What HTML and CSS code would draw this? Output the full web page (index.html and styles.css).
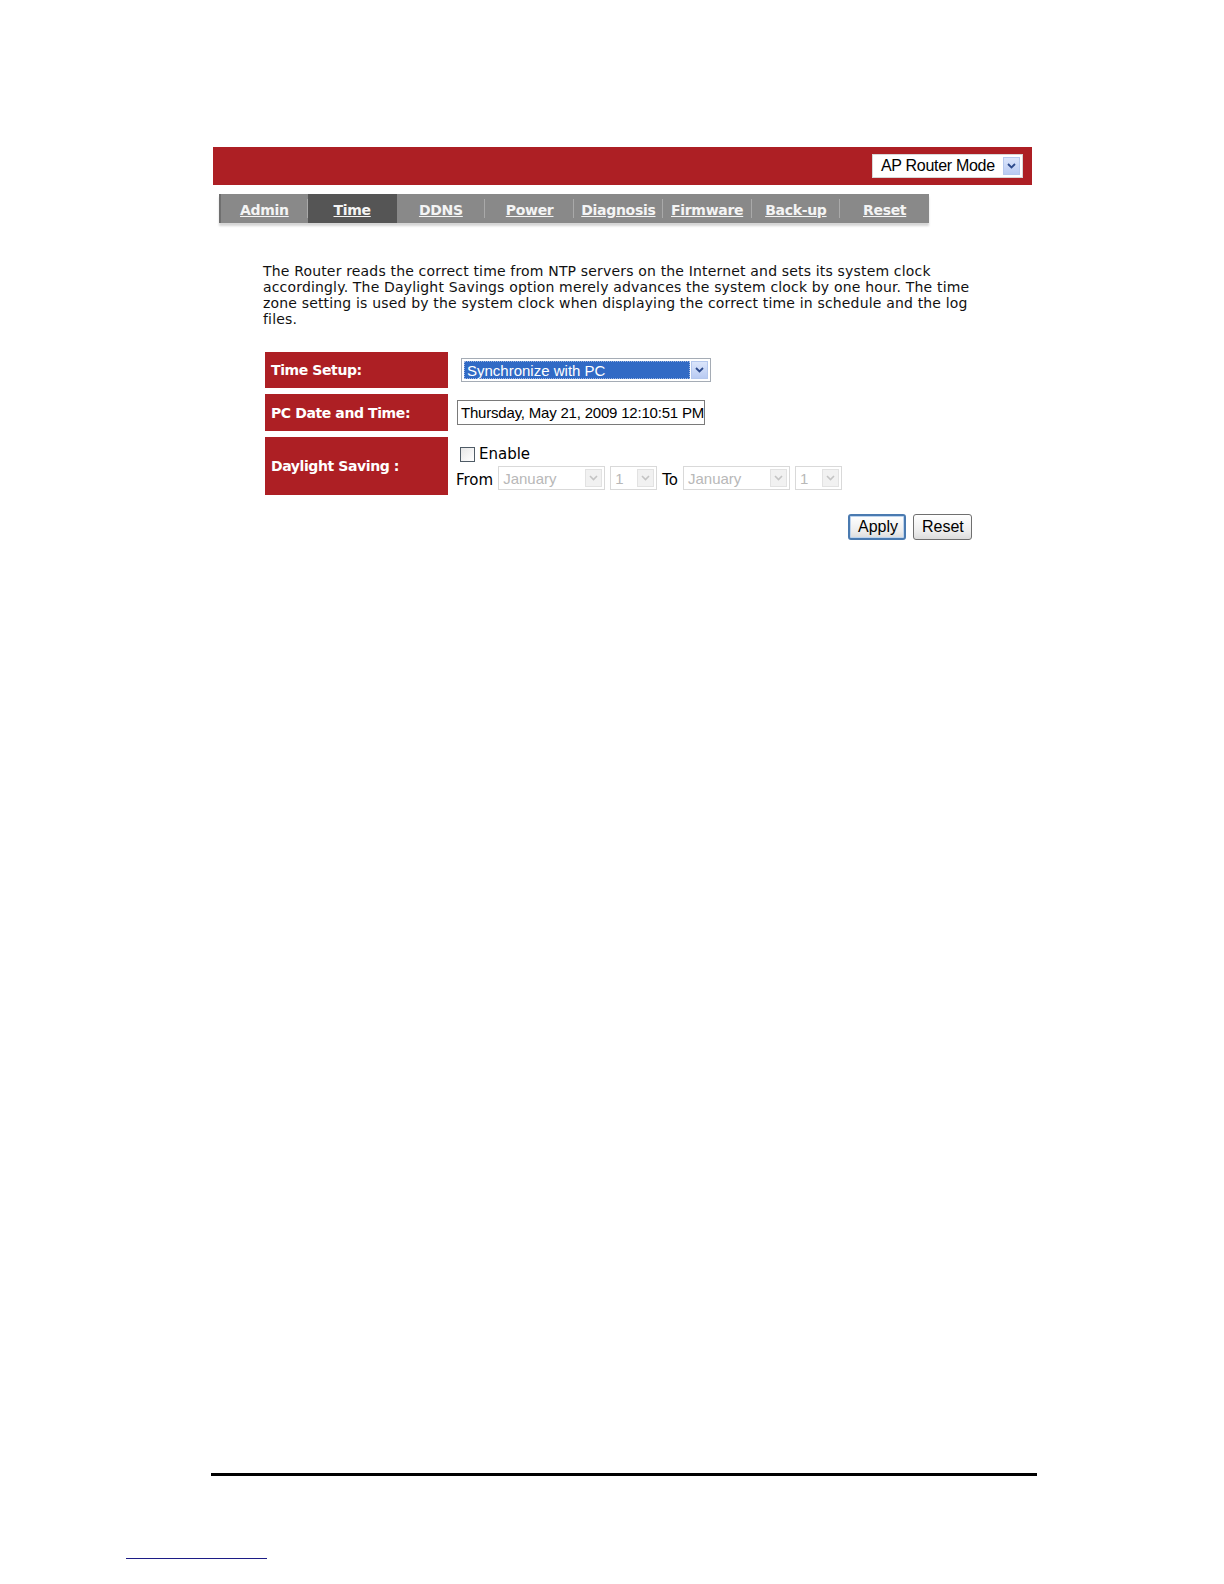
FILE: index.html
```html
<!DOCTYPE html>
<html>
<head>
<meta charset="utf-8">
<title>Time</title>
<link rel="stylesheet" href="styles.css">
</head>
<body>
<div class="page">
  <div class="header">
    <div class="sel sel-mode">
      <span class="sel-val">AP Router Mode</span>
      <span class="sel-btn"><svg width="9" height="6" viewBox="0 0 9 6"><path d="M1 1 L4.5 4.5 L8 1" fill="none" stroke="#2d4a8c" stroke-width="1.8"/></svg></span>
    </div>
  </div>
  <div class="tabs">
    <a class="tab">Admin</a>
    <a class="tab active">Time</a>
    <a class="tab">DDNS</a>
    <a class="tab">Power</a>
    <a class="tab">Diagnosis</a>
    <a class="tab">Firmware</a>
    <a class="tab">Back-up</a>
    <a class="tab last">Reset</a>
  </div>
  <div class="content">
    <p class="intro">The Router reads the correct time from NTP servers on the Internet and sets its system clock accordingly. The Daylight Savings option merely advances the system clock by one hour. The time zone setting is used by the system clock when displaying the correct time in schedule and the log files.</p>
    <div class="form">
      <div class="row row1">
        <div class="label">Time Setup:</div>
        <div class="value v1">
          <div class="sel sel-setup">
            <span class="sel-val hl">Synchronize with PC</span>
            <span class="sel-btn"><svg width="9" height="6" viewBox="0 0 9 6"><path d="M1 1 L4.5 4.5 L8 1" fill="none" stroke="#2d4a8c" stroke-width="1.8"/></svg></span>
          </div>
        </div>
      </div>
      <div class="row row2">
        <div class="label">PC Date and Time:</div>
        <div class="value v2">
          <div class="textbox">Thursday, May 21, 2009 12:10:51 PM</div>
        </div>
      </div>
      <div class="row row3">
        <div class="label">Daylight Saving :</div>
        <div class="value v3">
          <div class="enable"><span class="checkbox"></span>Enable</div>
          <div class="range">
            <span class="word">From</span>
            <div class="sel dis w-month"><span class="sel-val">January</span><span class="sel-btn"><svg width="9" height="6" viewBox="0 0 9 6"><path d="M1 1 L4.5 4.5 L8 1" fill="none" stroke="#c4c4c4" stroke-width="1.6"/></svg></span></div>
            <div class="sel dis w-day"><span class="sel-val">1</span><span class="sel-btn"><svg width="9" height="6" viewBox="0 0 9 6"><path d="M1 1 L4.5 4.5 L8 1" fill="none" stroke="#c4c4c4" stroke-width="1.6"/></svg></span></div>
            <span class="word">To</span>
            <div class="sel dis w-month"><span class="sel-val">January</span><span class="sel-btn"><svg width="9" height="6" viewBox="0 0 9 6"><path d="M1 1 L4.5 4.5 L8 1" fill="none" stroke="#c4c4c4" stroke-width="1.6"/></svg></span></div>
            <div class="sel dis w-day"><span class="sel-val">1</span><span class="sel-btn"><svg width="9" height="6" viewBox="0 0 9 6"><path d="M1 1 L4.5 4.5 L8 1" fill="none" stroke="#c4c4c4" stroke-width="1.6"/></svg></span></div>
          </div>
        </div>
      </div>
    </div>
    <div class="buttons">
      <button class="btn btn-apply">Apply</button>
      <button class="btn">Reset</button>
    </div>
  </div>
</div>
<div class="footer-rule"></div>
<div class="footer-link"></div>
</body>
</html>
```

FILE: styles.css
```css
html, body {
  margin: 0;
  padding: 0;
  background: #ffffff;
}
body {
  width: 1224px;
  height: 1584px;
  font-family: "DejaVu Sans", Verdana, sans-serif;
  color: #000;
}
.page {
  margin-left: 213px;
  padding-top: 147px;
  width: 819px;
}
.header {
  height: 38px;
  background: #ad1f24;
  display: flex;
  align-items: center;
  justify-content: flex-end;
  padding-right: 9px;
}
.sel {
  display: flex;
  align-items: stretch;
  box-sizing: border-box;
  background: #fff;
  font-family: "Liberation Sans", Arial, sans-serif;
}
.sel-val {
  flex: 1;
  display: flex;
  align-items: center;
  white-space: nowrap;
  overflow: hidden;
}
.sel-btn {
  width: 17px;
  display: flex;
  align-items: center;
  justify-content: center;
  background: linear-gradient(#dbe5fb, #b9cbf3);
  border: 1px solid #b5c8ee;
  box-sizing: border-box;
}
.sel-mode {
  width: 151px;
  height: 24px;
  border: 1px solid #d8d8d8;
  padding: 2px;
  font-size: 16px;
}
.sel-mode .sel-val {
  padding-left: 6px;
  letter-spacing: -0.3px;
}
.tabs {
  margin-top: 9px;
  margin-left: 6px;
  width: 710px;
  height: 29px;
  display: flex;
  background: #898989;
  border-left: 2px solid #6f6f6f;
  box-sizing: border-box;
  box-shadow: 0 3px 2px #d6d6d6;
}
.tab {
  width: 89px;
  height: 29px;
  display: flex;
  align-items: center;
  justify-content: center;
  font-weight: bold;
  font-size: 14px;
  letter-spacing: -0.3px;
  color: #f4f4f4;
  text-decoration: underline;
  position: relative;
  padding-top: 3px;
  box-sizing: border-box;
}
.tab:first-child {
  width: 87px;
}
.tab::after {
  content: "";
  position: absolute;
  right: 0;
  top: 5px;
  bottom: 5px;
  width: 1px;
  background: #a9a9a9;
}
.tab.last::after, .tab.active::after {
  display: none;
}
.tab.active {
  background: #555555;
}
.content {
  padding-left: 50px;
}
.intro {
  margin: 0;
  padding-top: 40px;
  width: 710px;
  font-size: 14px;
  letter-spacing: 0.17px;
  line-height: 16px;
  color: #111;
}
.form {
  margin-top: 25px;
  margin-left: 2px;
  display: flex;
  flex-direction: column;
  gap: 6px;
}
.row {
  display: flex;
  gap: 7px;
}
.label {
  width: 183px;
  background: #ad1f24;
  color: #fff;
  font-weight: bold;
  font-size: 14px;
  letter-spacing: -0.4px;
  display: flex;
  align-items: center;
  padding-left: 6px;
  box-sizing: border-box;
}
.row1 .label { height: 36px; }
.row2 .label { height: 37px; }
.row3 .label { height: 58px; }
.value {
  display: flex;
  flex-direction: column;
  justify-content: center;
}
.v1 { padding-left: 6px; }
.v2 { padding-left: 2px; }
.sel-setup {
  width: 250px;
  height: 24px;
  border: 1px solid #a5acb5;
  padding: 2px;
  font-size: 15px;
}
.sel-setup .sel-val.hl {
  background: #316ac5;
  color: #fff;
  padding-left: 3px;
  margin-right: 1px;
  outline: 1px dotted #9fb6e0;
  outline-offset: -1px;
}
.textbox {
  width: 248px;
  height: 25px;
  box-sizing: border-box;
  border: 1px solid #7a7a7a;
  font-family: "Liberation Sans", Arial, sans-serif;
  font-size: 15px;
  letter-spacing: -0.2px;
  display: flex;
  align-items: center;
  padding-left: 3px;
  white-space: nowrap;
}
.v3 {
  padding-left: 1px;
  justify-content: flex-start;
  padding-top: 9px;
}
.enable {
  display: flex;
  align-items: center;
  font-size: 15px;
  height: 16px;
}
.checkbox {
  width: 13px;
  height: 13px;
  border: 1px solid #4f5b66;
  background: linear-gradient(135deg, #e6e6e6, #ffffff);
  margin-left: 4px;
  margin-right: 4px;
}
.range {
  display: flex;
  align-items: flex-end;
  gap: 5px;
  margin-top: 4px;
}
.word {
  font-size: 15px;
  line-height: 18px;
  padding-bottom: 1px;
}
.sel.dis {
  height: 24px;
  border: 1px solid #d9d9d9;
  padding: 2px;
  color: #b8b8b8;
  font-size: 15px;
}
.sel.dis .sel-val {
  padding-left: 2px;
}
.sel.dis .sel-btn {
  background: #f1f1f1;
  border: 1px solid #e2e2e2;
}
.w-month { width: 107px; }
.w-day { width: 47px; }
.buttons {
  width: 709px;
  display: flex;
  justify-content: flex-end;
  gap: 7px;
  margin-top: 19px;
}
.btn {
  height: 26px;
  box-sizing: border-box;
  font-family: "Liberation Sans", Arial, sans-serif;
  font-size: 16px;
  color: #000;
  background: linear-gradient(#ffffff, #ececec 70%, #dcdcdc);
  border: 1px solid #6f6f6f;
  border-radius: 3px;
  padding: 0 8px;
  width: 59px;
}
.btn-apply {
  width: 58px;
  border: 2px solid #4a7ab0;
  box-shadow: inset 0 0 0 1px #bcd3ee;
}
.footer-rule {
  position: absolute;
  left: 211px;
  top: 1473px;
  width: 826px;
  height: 3px;
  background: #000;
}
.footer-link {
  position: absolute;
  left: 126px;
  top: 1558px;
  width: 141px;
  height: 1px;
  background: #1c1c86;
}
```
